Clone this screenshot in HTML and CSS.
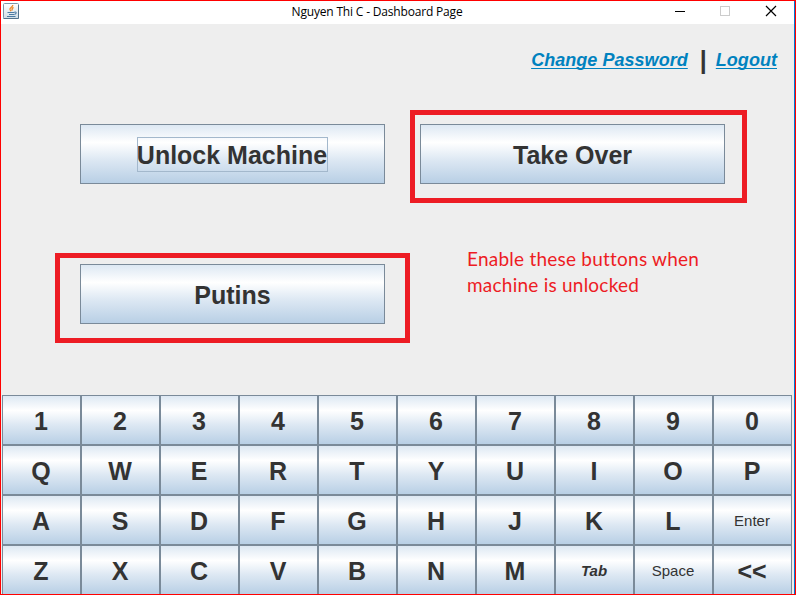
FILE: index.html
```html
<!DOCTYPE html>
<html lang="en">
<head>
<meta charset="utf-8">
<title>Nguyen Thi C - Dashboard Page</title>
<link rel="stylesheet" href="styles.css">
</head>
<body>
<div class="window">
  <header class="titlebar">
    <svg class="app-icon" width="16" height="16" viewBox="0 0 16 16">
      <defs><linearGradient id="tile" x1="0" y1="0" x2="0" y2="1"><stop offset="0" stop-color="#fff"/><stop offset="1" stop-color="#cfdde6"/></linearGradient></defs>
      <rect x=".5" y=".5" width="15" height="15" rx="1" fill="url(#tile)" stroke="#7d95a8"/>
      <path d="M.5 15.5h15V2" fill="none" stroke="#53748c"/>
      <path d="M9.800 2C10 4 6.300 4.500 7 6.500L8 8.300M10.500 4.300C8.500 5.300 8.800 6.300 9.300 7.500" fill="none" stroke="#ec8a2c" stroke-width="1.300"/>
      <path d="M4.500 9.500h7M6 11.500h5M4 13.500h8.500M11.500 9c2.500-.5 2 2-.2 2.500" fill="none" stroke="#4b7ba3" stroke-width="1.100"/>
    </svg>
    <h1 class="title">Nguyen Thi C - Dashboard Page</h1>
    <svg class="controls" width="104" height="12" viewBox="0 0 104 12" shape-rendering="crispEdges">
      <path d="M1 6.500h10" stroke="#000"/>
      <rect x="46.500" y="1.500" width="9" height="9" fill="none" stroke="#ccc"/>
      <path d="M92 1l10 10M102 1L92 11" stroke="#000" stroke-width="1.200" shape-rendering="auto"/>
    </svg>
  </header>
  <main class="content">
    <nav class="links">
      <a class="link">Change Password</a><span class="divider">|</span><a class="link">Logout</a>
    </nav>
    <section class="actions">
      <div class="action"><button class="button"><span class="focus">Unlock Machine</span></button></div>
      <div class="action"><button class="button">Take Over</button><i class="mark mark-takeover"></i></div>
      <div class="action"><button class="button">Putins</button><i class="mark mark-putins"></i></div>
      <p class="note">Enable these buttons when<br>machine is unlocked</p>
    </section>
    <section class="keyboard">
      <button class="key">1</button><button class="key">2</button><button class="key">3</button><button class="key">4</button><button class="key">5</button><button class="key">6</button><button class="key">7</button><button class="key">8</button><button class="key">9</button><button class="key">0</button>
      <button class="key">Q</button><button class="key">W</button><button class="key">E</button><button class="key">R</button><button class="key">T</button><button class="key">Y</button><button class="key">U</button><button class="key">I</button><button class="key">O</button><button class="key">P</button>
      <button class="key">A</button><button class="key">S</button><button class="key">D</button><button class="key">F</button><button class="key">G</button><button class="key">H</button><button class="key">J</button><button class="key">K</button><button class="key">L</button><button class="key small">Enter</button>
      <button class="key">Z</button><button class="key">X</button><button class="key">C</button><button class="key">V</button><button class="key">B</button><button class="key">N</button><button class="key">M</button><button class="key small tab">Tab</button><button class="key small">Space</button><button class="key">&lt;&lt;</button>
    </section>
  </main>
</div>
</body>
</html>
```
FILE: styles.css
```css
* { box-sizing: border-box; }
body { margin: 0; overflow: hidden; font-family: "Liberation Sans", Arial, sans-serif; }
.window {
  display: flex;
  flex-direction: column;
  width: 796px;
  height: 595px;
  overflow: hidden;
  border: 1px solid #f00;
  background: #eee;
}
.titlebar {
  display: grid;
  grid-template-columns: 187px 1fr 214px;
  flex: none;
  height: 23px;
  padding: 2px 16px 0 2px;
  border-right: 1px solid #0078d7;
  background: #fff;
}
.title {
  margin: 0;
  font: 12px/17px "Open Sans", "Noto Sans", sans-serif;
  letter-spacing: -0.18px;
  text-align: center;
  white-space: nowrap;
  color: #000;
}
.controls { justify-self: end; margin-top: 2px; }
.content {
  display: flex;
  flex-direction: column;
  flex: 1;
  min-height: 0;
  padding-left: 1px;
  border-right: 1px solid #0078d7;
}
.links {
  display: flex;
  flex: none;
  align-items: center;
  justify-content: flex-end;
  height: 100px;
  padding: 0 17px 28px 0;
}
.link {
  font-size: 18px;
  font-weight: bold;
  font-style: italic;
  letter-spacing: 0.04px;
  color: #0082bf;
  text-decoration: underline;
  text-decoration-thickness: 1px;
  text-underline-offset: 2px;
  text-decoration-skip-ink: none;
}
.divider { width: 28px; padding-left: 3px; font-size: 25px; font-weight: bold; text-align: center; color: #333; }
.actions {
  display: grid;
  grid-template-columns: 305px 305px;
  grid-template-rows: 60px 60px;
  flex: none;
  gap: 80px 35px;
  height: 271px;
  padding-left: 78px;
}
.action { position: relative; }
.button, .key {
  display: flex;
  align-items: center;
  justify-content: center;
  margin: 0;
  padding: 0;
  border: 1px solid #7a8a99;
  border-radius: 0;
  background: linear-gradient(#dde8f3 0, #fff 30%, #dde8f3 60%, #b8cfe5 100%);
  font: bold 25px "Liberation Sans", Arial, sans-serif;
  color: #333;
}
.button { width: 305px; height: 60px; padding-top: 3px; }
.focus { height: 35px; margin-top: -3px; padding: 0 1px 0 0; line-height: 37px; outline: 1px solid #a3b8cc; outline-offset: -1px; }
.mark { position: absolute; border: 5px solid #ed1c24; }
.mark-takeover { left: -10px; top: -14px; width: 337px; height: 93px; }
.mark-putins { left: -25px; top: -11px; width: 355px; height: 90px; }
.note {
  margin: -18px 0 0 47px;
  font: 19px/26px Lato, "Open Sans", sans-serif;
  letter-spacing: 0.23px;
  white-space: nowrap;
  color: #ed1c24;
}
.keyboard {
  display: grid;
  grid-template-columns: repeat(10, 79px);
  grid-auto-rows: 50px;
  flex: none;
}
.key { padding: 3px 1px 0 0; }
.small { padding-top: 1px; font-size: 15px; font-weight: normal; }
.tab { font-weight: bold; font-style: italic; }
```
